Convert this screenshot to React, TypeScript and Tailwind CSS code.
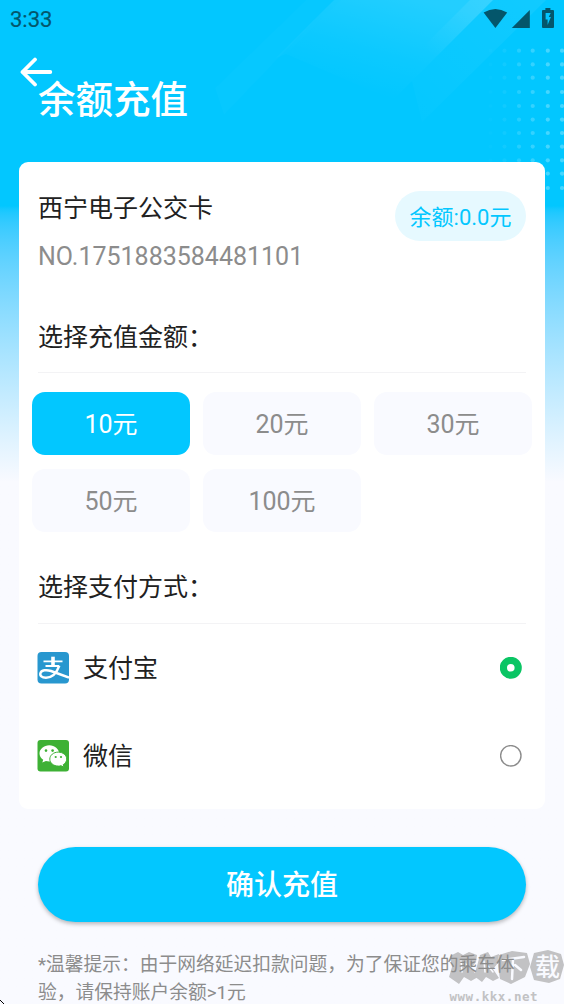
import { useState } from "react";

const dotColumns = [
  { x: 490.5, o: 0.02 },
  { x: 504.5, o: 0.06 },
  { x: 519, o: 0.14 },
  { x: 532.7, o: 0.2 },
  { x: 547.8, o: 0.27 },
  { x: 562, o: 0.27 },
];
const dotRows = [50.7, 64.4, 77.7, 92, 106, 119.6, 133, 146.6, 160.3, 173.6, 188];

function Backdrop() {
  return (
    <svg className="absolute inset-0" width="564" height="220" viewBox="0 0 564 220" aria-hidden="true">
      <defs>
        <linearGradient id="beam" gradientUnits="userSpaceOnUse" x1="420" y1="0" x2="393" y2="100">
          <stop offset="0" stopColor="#fff" stopOpacity="0.13" />
          <stop offset="0.6" stopColor="#fff" stopOpacity="0.04" />
          <stop offset="1" stopColor="#fff" stopOpacity="0" />
        </linearGradient>
        <linearGradient id="beamEdge" gradientUnits="userSpaceOnUse" x1="490" y1="0" x2="430" y2="55">
          <stop offset="0" stopColor="#fff" stopOpacity="0.09" />
          <stop offset="1" stopColor="#fff" stopOpacity="0" />
        </linearGradient>
        <linearGradient id="beamSoft" x1="1" y1="0" x2="0" y2="1">
          <stop offset="0" stopColor="#fff" stopOpacity="0.06" />
          <stop offset="1" stopColor="#fff" stopOpacity="0.01" />
        </linearGradient>
        <linearGradient id="beamLeft" gradientUnits="userSpaceOnUse" x1="340" y1="0" x2="284" y2="55">
          <stop offset="0" stopColor="#fff" stopOpacity="0.09" />
          <stop offset="1" stopColor="#fff" stopOpacity="0.02" />
        </linearGradient>
      </defs>
      <path d="M341 0H493L393 100L286 54Z" fill="url(#beam)" />
      <path d="M470 0H493L428 65L425 45Z" fill="url(#beamEdge)" />
      <path d="M493 0H546L422 122L412 81Z" fill="url(#beamSoft)" />
      <path d="M334 0H341L286 54L276 58Z" fill="url(#beamLeft)" />
      <path d="M306 0H334L224 115L215 88Z" fill="#fff" fillOpacity="0.018" />
      {dotColumns.map((c) =>
        dotRows.map((y) => <circle key={`${c.x}-${y}`} cx={c.x} cy={y} r="2.1" fill="#fff" fillOpacity={c.o} />)
      )}
    </svg>
  );
}

function StatusBar() {
  return (
    <div className="flex h-[38px] items-center justify-between pl-[10px] text-[#04566b]">
      <span className="pt-[2px] text-[22px] leading-[36px] [-webkit-text-stroke:0.2px]">3:33</span>
      <svg width="84" height="38" viewBox="480 0 84 38" fill="currentColor">
        <path d="M483.6 12.6Q495.3 5.4 507.2 12.6L495.4 28Z" />
        <path d="M529.8 10V28H511.8Z" />
        <path
          fillRule="evenodd"
          d="M545.400 8h5v2H553q1 0 1 1V27q0 1-1 1H543q-1 0-1-1V11q0-1 1-1h2.400ZM545.600 13v6.500h2V25l3.300-8h-2.100l1.900-4Z"
        />
      </svg>
    </div>
  );
}

function AlipayIcon() {
  return (
    <svg className="-ml-[1px]" width="32" height="32" viewBox="0 0 32 32">
      <rect x="0.500" y="0" width="31.500" height="31.400" rx="4" fill="#2897cf" />
      <g fill="none" stroke="#fff">
        <path d="M6.500 9.400H25.500M8.500 14H22" strokeWidth="1.800" />
        <path d="M16 4.700V14.200" strokeWidth="3.600" />
        <path
          d="M22.300 13.700C20 20.200 15.500 25.700 9 25.700C4.500 25.700 2.800 23.500 3.400 21.200C4.300 18 9.500 17.400 14 19L32 25.700"
          strokeWidth="2.500"
        />
      </g>
    </svg>
  );
}

function WechatIcon() {
  return (
    <svg className="-ml-[1px]" width="32" height="32" viewBox="0 0 32 32">
      <rect x="0.500" y="0" width="31.500" height="31.400" rx="3" fill="#3eb135" />
      <path d="M12.300 5.200C6.900 5.200 2.500 8.900 2.500 13.400c0 2.600 1.400 4.800 3.700 6.300L5.300 22.600l3.600-1.700c1.100.3 2.200.5 3.400.5 5.400 0 9.800-3.600 9.800-8S17.700 5.200 12.300 5.200Z" fill="#fff" />
      <path d="M21.300 12.100c-4.700 0-8.500 3.100-8.500 7s3.800 7 8.500 7c.9 0 1.800-.1 2.700-.4l3 1.600-.8-2.600c2.100-1.300 3.500-3.300 3.500-5.600 0-3.900-3.700-7-8.400-7Z" fill="#fff" stroke="#3eb135" strokeWidth="1" />
      <g fill="#3eb135">
        <circle cx="9" cy="10.600" r="1.300" />
        <circle cx="15.600" cy="10.600" r="1.300" />
        <circle cx="18.700" cy="17" r="1.100" />
        <circle cx="24" cy="17" r="1.100" />
      </g>
    </svg>
  );
}

function Radio({ checked }: { checked: boolean }) {
  return (
    <svg width="22" height="22" viewBox="0 0 22 22" fill="none">
      {checked ? (
        <circle cx="10.800" cy="10.800" r="7.400" stroke="#0ac564" strokeWidth="7.200" />
      ) : (
        <circle cx="10.800" cy="10.800" r="10.200" stroke="#8c8c8c" strokeWidth="1.400" />
      )}
    </svg>
  );
}

function SectionTitle({ children }: { children: string }) {
  return <h2 className="h-[36px] pt-[1px] text-[25px] leading-[36px] text-[#212121]">{children}</h2>;
}

function Watermark() {
  return (
    <svg className="absolute right-0 bottom-0" width="118" height="56" viewBox="446 948 118 56" aria-hidden="true">
      <g fill="#c2c2c4">
        <path d="M450 956L458 952L463 955L469 952L477 955L476 962L471 968L478 977L471 981L464 977L459 984L449 977L452 967Z" />
        <path d="M480 955L488 952L491 957L499 954L498 963L493 969L499 978L493 981L486 977L482 982L474 976L477 966Z" />
        <path d="M499 955L512 951L527 953L530 964L525 977L511 984L500 979L498 966Z" />
        <path d="M534 953L548 950L561 954L564 965L560 979L549 983L534 980L530 967Z" />
      </g>
      <g fill="none" stroke="#f9faff" strokeLinecap="round">
        <path d="M461 961L462 972M466 964L471 968M484 961L485 972M488 966L493 972" strokeWidth="1.500" />
        <path d="M503 960L524 957M513 959L512 979M515 965L521 970" strokeWidth="2.500" />
      </g>
      <text x="535" y="976" fontSize="25" fontWeight="500" fill="#f9faff" fontFamily="'Noto Sans CJK SC', sans-serif">载</text>
      <text x="449.500" y="1001" fontSize="12.500" fontWeight="700" fontFamily="'DejaVu Sans Mono', monospace" textLength="88" fill="#c2c2c4">www.kkx.net</text>
    </svg>
  );
}

const amounts = [10, 20, 30, 50, 100];

export default function App() {
  const [amount, setAmount] = useState(10);
  const [method, setMethod] = useState("alipay");
  const methods = [
    { id: "alipay", label: "支付宝", icon: <AlipayIcon /> },
    { id: "wechat", label: "微信", icon: <WechatIcon /> },
  ];

  return (
    <div className="relative h-[1004px] w-[564px] overflow-hidden bg-[#f9faff] bg-linear-to-b from-[#02c7ff] from-[206px] to-[#f9faff] to-[482px] font-['Roboto','Noto_Sans_CJK_SC',sans-serif]">
      <Backdrop />
      <Watermark />
      <div className="relative flex flex-col">
        <StatusBar />
        <header className="h-[124px] px-[20px] pt-[19px]">
          <svg className="block" width="34" height="30" viewBox="0 0 34 30" fill="none" stroke="#fff" strokeWidth="3.800" strokeLinecap="round" strokeLinejoin="round">
            <path d="M30.300 15H2.500M15 2.500L2.500 15L15 27.500" />
          </svg>
          <h1 className="-mt-[14px] ml-[18px] text-[37.500px] leading-[54px] font-medium text-white">余额充值</h1>
        </header>

        <main className="mx-[19px] h-[647px] rounded-[9px] bg-white px-[19px] pt-[29px]">
          <div className="flex justify-between">
            <div>
              <div className="text-[25px] leading-[36px] text-[#212121]">西宁电子公交卡</div>
              <div className="mt-[12px] text-[25px] leading-[36px] text-[#8c8c8c]">NO.1751883584481101</div>
            </div>
            <div className="flex h-[50px] w-[131px] items-center justify-center rounded-full bg-[#e6f9ff] pt-[2px] text-[22px] text-[#02c7ff]">余额:0.0元</div>
          </div>

          <section className="mt-[44px]">
            <SectionTitle>选择充值金额：</SectionTitle>
            <div className="mt-[17px] h-px bg-[#f3f3f5]" />
            <div className="-mx-[6px] mt-[19px] grid grid-cols-3 gap-x-[13px] gap-y-[14px]">
              {amounts.map((a) => (
                <button
                  key={a}
                  onClick={() => setAmount(a)}
                  className={`h-[63px] rounded-[13px] pt-[2px] text-[25px] ${a === amount ? "bg-[#02c7ff] text-white" : "bg-[#f9faff] text-[#8c8c8c]"}`}
                >
                  {a}元
                </button>
              ))}
            </div>
          </section>

          <section className="mt-[37px]">
            <SectionTitle>选择支付方式：</SectionTitle>
            <div className="mt-[18px] h-px bg-[#f3f3f5]" />
            {methods.map((m) => (
              <button key={m.id} onClick={() => setMethod(m.id)} className="flex h-[88px] w-full items-center pr-[4px]">
                {m.icon}
                <span className="ml-[14px] flex-1 pt-[2px] text-left text-[25px] text-[#212121]">{m.label}</span>
                <Radio checked={method === m.id} />
              </button>
            ))}
          </section>
        </main>

        <button className="mx-[38px] mt-[38px] h-[75px] rounded-full bg-[#02c7ff] pt-[2px] text-[28px] font-medium text-white shadow-[0_2px_4px_rgba(0,0,0,0.28)]">
          确认充值
        </button>
        <p className="mx-[38px] mt-[29px] text-[18.750px] leading-[28px] text-[#8c8c8c]">
          *温馨提示：由于网络延迟扣款问题，为了保证您的乘车体验，请保持账户余额&gt;1元
        </p>
      </div>
      <svg className="absolute bottom-0 left-0" width="4" height="5" viewBox="0 0 4 5" stroke="#000" aria-hidden="true">
        <path d="M0 1L4 5" />
      </svg>
    </div>
  );
}
